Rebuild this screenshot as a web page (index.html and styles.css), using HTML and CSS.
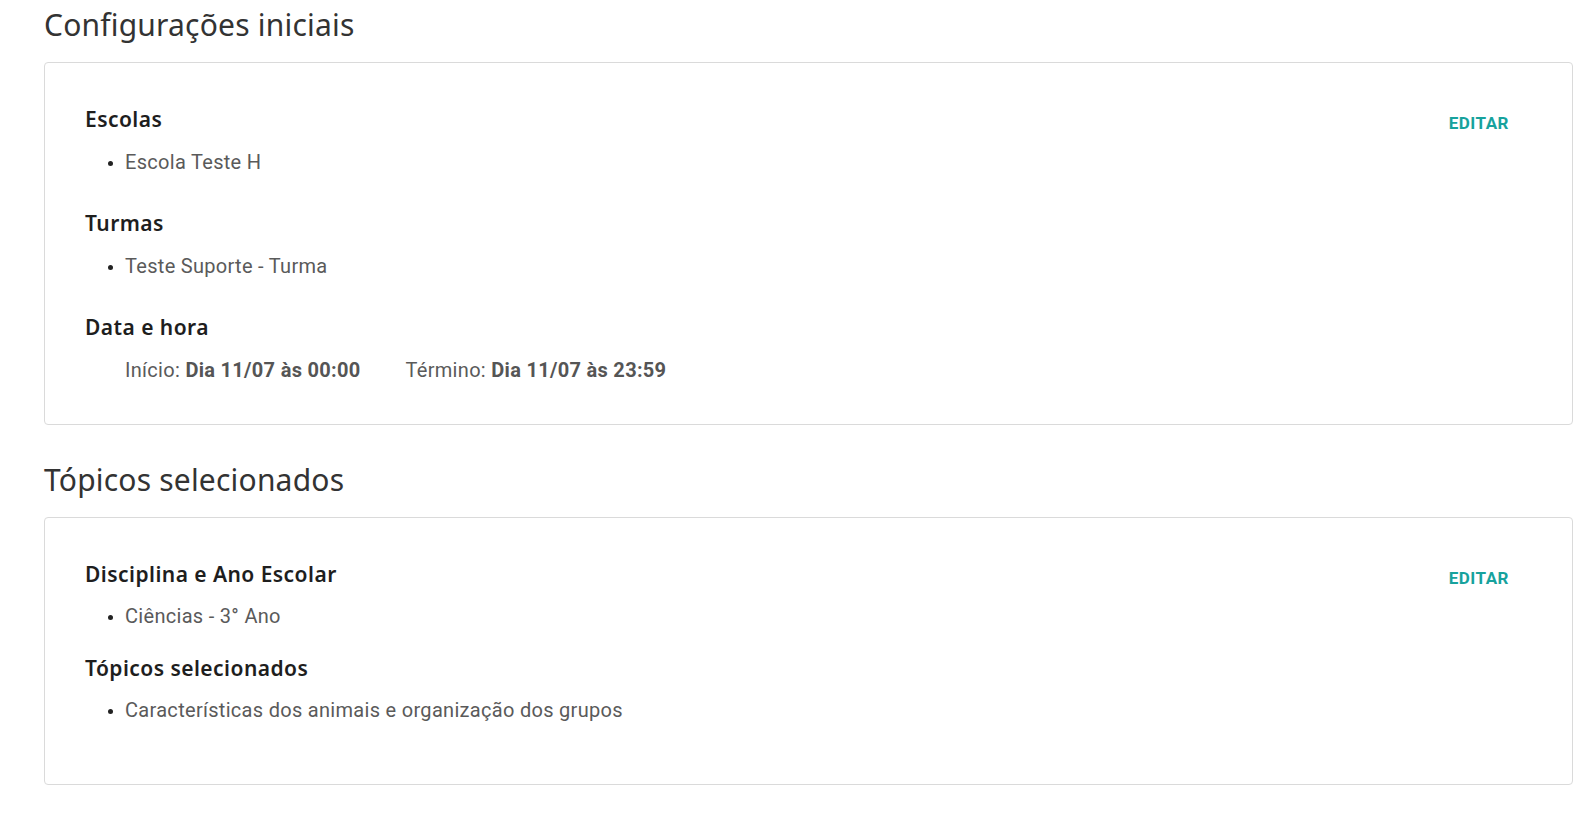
FILE: index.html
```html
<!DOCTYPE html>
<html lang="pt-BR">
<head>
<meta charset="utf-8">
<title>Resumo</title>
<link rel="stylesheet" href="styles.css">
</head>
<body>
<main class="page">
  <h1 class="page-title">Configurações iniciais</h1>
  <section class="card card--config">
    <div class="card-body">
      <div class="group">
        <h2 class="group-title">Escolas</h2>
        <ul class="items"><li>Escola Teste H</li></ul>
      </div>
      <div class="group">
        <h2 class="group-title">Turmas</h2>
        <ul class="items"><li>Teste Suporte - Turma</li></ul>
      </div>
      <div class="group">
        <h2 class="group-title">Data e hora</h2>
        <div class="dates">
          <span>Início: <b>Dia 11/07 às 00:00</b></span>
          <span>Término: <b>Dia 11/07 às 23:59</b></span>
        </div>
      </div>
    </div>
    <a class="edit" href="#">EDITAR</a>
  </section>

  <h1 class="page-title page-title--next">Tópicos selecionados</h1>
  <section class="card card--topics">
    <div class="card-body">
      <div class="group">
        <h2 class="group-title">Disciplina e Ano Escolar</h2>
        <ul class="items"><li>Ciências - 3° Ano</li></ul>
      </div>
      <div class="group">
        <h2 class="group-title">Tópicos selecionados</h2>
        <ul class="items"><li>Características dos animais e organização dos grupos</li></ul>
      </div>
    </div>
    <a class="edit" href="#">EDITAR</a>
  </section>
</main>
</body>
</html>
```

FILE: styles.css
```css
* { box-sizing: border-box; }
html, body { margin: 0; padding: 0; background: #ffffff; }
body { font-family: "Noto Sans", "Open Sans", sans-serif; }

.page {
  padding: 5px 22px 20px 44px;
}

.page-title {
  margin: 0 0 17px 0;
  font-size: 30px;
  line-height: 40px;
  font-weight: 400;
  color: #333333;
  letter-spacing: 0.2px;
}
.page-title--next { margin-top: 35px; margin-bottom: 17px; }

.card {
  display: flex;
  align-items: flex-start;
  border: 1px solid #dadada;
  border-radius: 4px;
  padding: 42px 63px 40px 40px;
}
.card--topics { padding-top: 42px; padding-bottom: 60px; }

.card-body { flex: 1; }

.group-title {
  margin: 0;
  font-size: 21px;
  line-height: 28px;
  font-weight: 600;
  letter-spacing: 0.45px;
  color: #1e1e1e;
}

.items {
  margin: 15px 0 0 0;
  padding-left: 40px;
  font-family: "Roboto", "Liberation Sans", sans-serif;
  font-size: 20px;
  line-height: 28px;
  letter-spacing: 0.3px;
  color: #5a5a5a;
}
.items li::marker { color: #222; font-size: 16px; }

.group + .group { margin-top: 33px; }

.card--topics .items { margin-top: 14px; }
.card--topics .group + .group { margin-top: 24px; }

.dates {
  margin-top: 15px;
  padding-left: 40px;
  display: flex;
  gap: 45px;
  font-family: "Roboto", "Liberation Sans", sans-serif;
  font-size: 20px;
  line-height: 28px;
  letter-spacing: 0.3px;
  color: #5a5a5a;
}
.dates b { font-weight: 700; color: #555555; }

.edit {
  margin-top: 4px;
  font-family: "Roboto", "Liberation Sans", sans-serif;
  font-size: 17px;
  line-height: 28px;
  font-weight: 700;
  letter-spacing: 0.5px;
  color: #17a29d;
  text-decoration: none;
}
```
